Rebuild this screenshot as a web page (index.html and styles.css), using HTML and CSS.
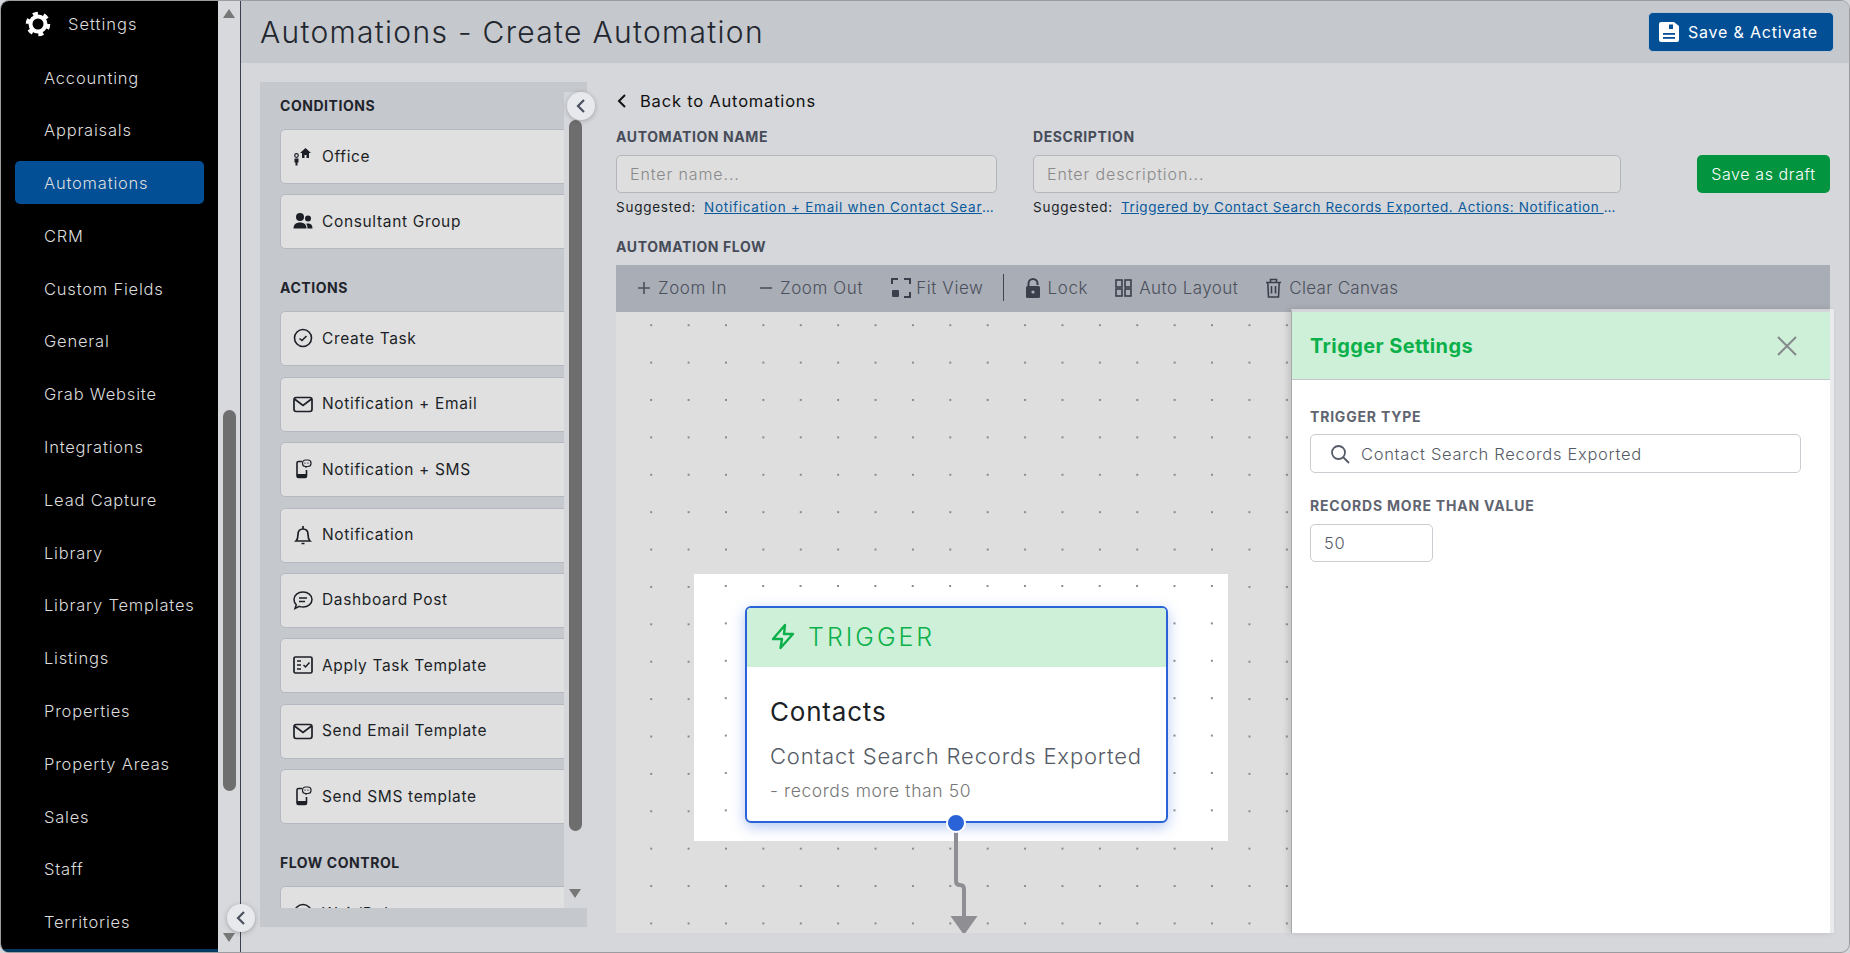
FILE: index.html
```html
<!DOCTYPE html>
<html lang="en">
<head>
  <meta charset="UTF-8">
  <title>Automations - Create Automation</title>
  <link rel="stylesheet" href="styles.css">
</head>
<body>
  <svg class="icon-defs" width="0" height="0">
    <symbol id="i-mail" viewBox="0 0 20 20"><rect x="1" y="3.500" width="18" height="14" rx="2.200" fill="none" stroke="#1c1f26" stroke-width="1.700"/><path d="M1.500 5l8.500 6.500L18.500 5" fill="none" stroke="#1c1f26" stroke-width="1.700"/></symbol>
    <symbol id="i-sms" viewBox="0 0 20 20"><path d="M9 2.500H5.500A1.500 1.500 0 0 0 4 4v13a1.500 1.500 0 0 0 1.500 1.500h6.500a1.500 1.500 0 0 0 1.500-1.500v-6" fill="none" stroke="#1c1f26" stroke-width="1.600"/><rect x="4" y="15" width="9.500" height="3.500" fill="#1c1f26"/><rect x="9.500" y="1" width="8.500" height="6.500" rx="3" fill="none" stroke="#1c1f26" stroke-width="1.200"/><path d="M11.500 4.200h1M14.500 4.200h1" stroke="#1c1f26" stroke-width="1.300"/><path d="M12 7.500l1 2 1-2" fill="#1c1f26"/></symbol>
  </svg>

  <div class="window">
    <!-- Left nav -->
    <aside class="sidebar">
      <div class="sidebar-head">
        <svg class="gear" width="26" height="26" viewBox="0 0 26 26">
          <circle cx="13" cy="13" r="7.500" fill="none" stroke="#fff" stroke-width="4"/>
          <circle cx="13" cy="13" r="10.500" fill="none" stroke="#fff" stroke-width="3.500" stroke-dasharray="5 6"/>
        </svg>
        <span>Settings</span>
      </div>
      <nav class="side-nav">
        <a class="side-link">Accounting</a>
        <a class="side-link">Appraisals</a>
        <a class="side-link active">Automations</a>
        <a class="side-link">CRM</a>
        <a class="side-link">Custom Fields</a>
        <a class="side-link">General</a>
        <a class="side-link">Grab Website</a>
        <a class="side-link">Integrations</a>
        <a class="side-link">Lead Capture</a>
        <a class="side-link">Library</a>
        <a class="side-link">Library Templates</a>
        <a class="side-link">Listings</a>
        <a class="side-link">Properties</a>
        <a class="side-link">Property Areas</a>
        <a class="side-link">Sales</a>
        <a class="side-link">Staff</a>
        <a class="side-link">Territories</a>
      </nav>
      <div class="side-peek"></div>
    </aside>

    <div class="side-track">
      <span class="arrow-up"></span>
      <span class="side-thumb"></span>
      <span class="arrow-down"></span>
      <button class="collapse side-collapse"><svg width="14" height="16" viewBox="0 0 14 16"><path d="M10 2L4 8l6 6" fill="none" stroke="#4a5060" stroke-width="2.200"/></svg></button>
    </div>

    <main class="main">
      <header class="top-bar">
        <h1>Automations - Create Automation</h1>
        <button class="btn-activate">
          <svg width="20" height="20" viewBox="0 0 20 20">
            <path d="M2 0h13l5 4v14a2 2 0 0 1-2 2H2a2 2 0 0 1-2-2V2a2 2 0 0 1 2-2z" fill="#fff"/>
            <rect x="10" y="2.500" width="4" height="4.500" fill="#024f96"/>
            <rect x="4" y="11" width="12" height="1.800" fill="#024f96"/>
            <rect x="4" y="15" width="12" height="1.800" fill="#024f96"/>
          </svg>
          Save &amp; Activate
        </button>
      </header>

      <div class="page">
        <!-- Block palette -->
        <section class="palette">
          <div class="palette-list">
            <h3 class="palette-title">CONDITIONS</h3>
            <div class="block-card">
              <svg width="20" height="20" viewBox="0 0 20 20"><path d="M7 7l5.500-5 5.500 5h-2v5h-2.500V9h-2v3H9V7z" fill="#1c1f26"/><circle cx="3.500" cy="9.500" r="1.800" fill="none" stroke="#1c1f26" stroke-width="1.200"/><path d="M1.500 12.500h4v4H4.500v3h-2v-3h-1z" fill="#1c1f26"/></svg>
              Office
            </div>
            <div class="block-card">
              <svg width="20" height="20" viewBox="0 0 20 20"><circle cx="7" cy="6" r="4" fill="#1c1f26"/><circle cx="15" cy="7.500" r="3" fill="#1c1f26"/><path d="M0.500 17.500c0-4 2.500-6 6.500-6s6.500 2 6.500 6z" fill="#1c1f26"/><path d="M14.500 17.500h5c0-3.500-1.500-5-4.500-5-.8 0-1.300.1-1.900.3 1 1.200 1.400 2.800 1.400 4.700z" fill="#1c1f26"/></svg>
              Consultant Group
            </div>

            <h3 class="palette-title next">ACTIONS</h3>
            <div class="block-card">
              <svg width="20" height="20" viewBox="0 0 20 20"><circle cx="10" cy="10" r="8.500" fill="none" stroke="#1c1f26" stroke-width="1.600"/><path d="M6.500 10.500l2.500 2 4.500-4.500" fill="none" stroke="#1c1f26" stroke-width="1.600"/></svg>
              Create Task
            </div>
            <div class="block-card"><svg width="20" height="20"><use href="#i-mail"/></svg>Notification + Email</div>
            <div class="block-card"><svg width="20" height="20"><use href="#i-sms"/></svg>Notification + SMS</div>
            <div class="block-card">
              <svg width="20" height="20" viewBox="0 0 20 20"><path d="M3 16c1.500-1.500 2-3 2-6.500C5 6 7 4 10 4s5 2 5 5.500c0 3.500.5 5 2 6.500z" fill="none" stroke="#1c1f26" stroke-width="1.700"/><path d="M10 1v3M8.500 18.500h3" stroke="#1c1f26" stroke-width="1.700"/></svg>
              Notification
            </div>
            <div class="block-card">
              <svg width="20" height="20" viewBox="0 0 20 20"><path d="M10 2c5 0 9 3 9 7.500S15 17 10 17c-1.500 0-2.600-.2-3.700-.6L2 18.500l1.300-3.800C1.800 13.400 1 11.500 1 9.500 1 5 5 2 10 2z" fill="none" stroke="#1c1f26" stroke-width="1.500"/><path d="M6 8h8M6 11.500h6" stroke="#1c1f26" stroke-width="1.500"/></svg>
              Dashboard Post
            </div>
            <div class="block-card">
              <svg width="20" height="20" viewBox="0 0 20 20"><rect x="1" y="2" width="18" height="16" rx="1.500" fill="none" stroke="#1c1f26" stroke-width="1.700"/><path d="M4 6h4M4 10h4M4 14h4" stroke="#1c1f26" stroke-width="1.500"/><path d="M10.500 10l2 2 4-4.500" fill="none" stroke="#1c1f26" stroke-width="1.500"/></svg>
              Apply Task Template
            </div>
            <div class="block-card"><svg width="20" height="20"><use href="#i-mail"/></svg>Send Email Template</div>
            <div class="block-card"><svg width="20" height="20"><use href="#i-sms"/></svg>Send SMS template</div>

            <h3 class="palette-title next">FLOW CONTROL</h3>
            <div class="block-card">
              <svg width="20" height="20" viewBox="0 0 20 20"><circle cx="10" cy="10" r="8.500" fill="none" stroke="#1c1f26" stroke-width="1.600"/></svg>
              Wait/Delay
            </div>
          </div>
          <div class="palette-track">
            <span class="palette-thumb"></span>
            <span class="arrow-down"></span>
          </div>
          <button class="collapse palette-collapse"><svg width="14" height="16" viewBox="0 0 14 16"><path d="M10 2L4 8l6 6" fill="none" stroke="#4a5060" stroke-width="2.200"/></svg></button>
        </section>

        <!-- Form and canvas -->
        <section class="editor">
          <a class="back-link">
            <svg width="12" height="16" viewBox="0 0 12 16"><path d="M9 2L3 8l6 6" fill="none" stroke="#111" stroke-width="2"/></svg>
            Back to Automations
          </a>

          <div class="form-row">
            <div class="field field-name">
              <label class="form-label">AUTOMATION NAME</label>
              <div class="text-input">Enter name...</div>
              <div class="suggest"><span>Suggested:</span><a>Notification + Email when Contact Search Records Exported</a></div>
            </div>
            <div class="field field-desc">
              <label class="form-label">DESCRIPTION</label>
              <div class="text-input">Enter description...</div>
              <div class="suggest"><span>Suggested:</span><a>Triggered by Contact Search Records Exported. Actions: Notification + Email</a></div>
            </div>
            <button class="btn-draft">Save as draft</button>
          </div>

          <label class="form-label flow-label">AUTOMATION FLOW</label>
          <div class="toolbar">
            <span class="tool tool-in"><svg width="14" height="14" viewBox="0 0 14 14"><path d="M7 1v12M1 7h12" stroke="#4c505c" stroke-width="1.600"/></svg>Zoom In</span>
            <span class="tool tool-out"><svg width="14" height="14" viewBox="0 0 14 14"><path d="M1 7h12" stroke="#4c505c" stroke-width="1.600"/></svg>Zoom Out</span>
            <span class="tool tool-fit"><svg width="20" height="20" viewBox="0 0 20 20"><path d="M1 6V1h6M13 1h6v5M19 14v5h-6" fill="none" stroke="#3a3f4b" stroke-width="2"/><rect x="1" y="12" width="7" height="7" rx="1" fill="#3a3f4b"/></svg>Fit View</span>
            <span class="tool-sep"></span>
            <span class="tool tool-lock"><svg width="16" height="20" viewBox="0 0 16 20"><path d="M3.500 9V5.500a4.500 4.500 0 0 1 9 0V7" fill="none" stroke="#3a3f4b" stroke-width="2"/><rect x="1" y="8" width="14" height="12" rx="1.500" fill="#3a3f4b"/><circle cx="8" cy="14" r="1.600" fill="#a9adb6"/></svg>Lock</span>
            <span class="tool tool-auto"><svg width="17" height="18" viewBox="0 0 17 18"><rect x="1" y="1" width="6" height="7" fill="none" stroke="#3a3f4b" stroke-width="1.600"/><rect x="10" y="1" width="6" height="7" fill="none" stroke="#3a3f4b" stroke-width="1.600"/><rect x="1" y="10" width="6" height="7" fill="none" stroke="#3a3f4b" stroke-width="1.600"/><rect x="10" y="10" width="6" height="7" fill="none" stroke="#3a3f4b" stroke-width="1.600"/></svg>Auto Layout</span>
            <span class="tool tool-clear"><svg width="17" height="20" viewBox="0 0 17 20"><path d="M1 4.500h15M5.500 4V1.500h6V4M2.800 4.500l.7 14.500h10l.7-14.500M6.500 8v7.500M10.500 8v7.500" fill="none" stroke="#3a3f4b" stroke-width="1.600"/></svg>Clear Canvas</span>
          </div>

          <div class="canvas">
            <div class="flow-layer">
              <div class="node-backdrop"></div>
              <svg class="flow-edge" width="40" height="110" viewBox="0 0 40 110">
                <path d="M10 8v49q0 4 4 4q4 0 4 4v28" fill="none" stroke="#8e8e93" stroke-width="4"/>
                <path d="M4.500 92h27L18 111z" fill="#8e8e93"/>
              </svg>
              <div class="node">
                <div class="node-head">
                  <svg width="24" height="27" viewBox="0 0 24 27"><path d="M14 2L2 16h9l-1.500 9L22 11h-9z" fill="none" stroke="#0cb04b" stroke-width="2.400" stroke-linejoin="round"/></svg>
                  <span>TRIGGER</span>
                </div>
                <div class="node-body">
                  <div class="node-title">Contacts</div>
                  <div class="node-sub">Contact Search Records Exported</div>
                  <div class="node-note">- records more than 50</div>
                </div>
                <span class="node-port"></span>
              </div>
            </div>

            <aside class="settings-panel">
              <div class="panel-head">
                <h2>Trigger Settings</h2>
                <svg width="22" height="22" viewBox="0 0 22 22"><path d="M2 2l18 18M20 2L2 20" stroke="#858a8c" stroke-width="2"/></svg>
              </div>
              <div class="panel-body">
                <label class="panel-label">TRIGGER TYPE</label>
                <div class="panel-input type-input">
                  <svg width="20" height="20" viewBox="0 0 20 20"><circle cx="8.500" cy="8.500" r="6.500" fill="none" stroke="#555b66" stroke-width="1.800"/><path d="M13 13l6 6" stroke="#555b66" stroke-width="1.800"/></svg>
                  Contact Search Records Exported
                </div>
                <label class="panel-label second">RECORDS MORE THAN VALUE</label>
                <div class="panel-input value-input">50</div>
              </div>
            </aside>
          </div>
        </section>
      </div>
    </main>
  </div>
</body>
</html>
```

FILE: styles.css
```css
/* Page frame */
* {
  box-sizing: border-box;
}
body {
  margin: 0;
  font-family: Inter, "Open Sans", sans-serif;
  background-color: #d5d7db;
  color: #1c1f26;
}
.icon-defs {
  position: absolute;
}
.window {
  display: flex;
  height: 953px;
  border: 1px solid #9a9c9f;
  border-radius: 9px;
  overflow: hidden;
}

/* Left nav */
.sidebar {
  display: flex;
  flex-direction: column;
  width: 217px;
  background-color: #000;
  color: #ddd;
}
.sidebar-head {
  display: flex;
  align-items: center;
  gap: 17px;
  height: 46px;
  padding-left: 24px;
  font-size: 16.500px;
  font-weight: 300;
  letter-spacing: 1px;
}
.side-nav {
  flex: 1;
  display: flex;
  flex-direction: column;
  gap: 9.8px;
  padding: 8.500px 14px 0;
  overflow: hidden;
}
.side-link {
  flex: none;
  height: 43px;
  line-height: 44px;
  padding-left: 29px;
  border-radius: 5px;
  font-size: 16.500px;
  font-weight: 300;
  letter-spacing: 0.8px;
}
.side-link.active {
  background-color: #024f96;
}
.side-peek {
  flex: none;
  height: 3px;
  background-color: #043a60;
}

/* Scrollbars */
.side-track {
  position: relative;
  flex: none;
  width: 23px;
  padding: 8px 5px 0;
  background-color: #d8d9dc;
  border-right: 1px solid #3a4050;
}
.arrow-up,
.arrow-down {
  display: block;
  width: 0;
  border-left: 6px solid transparent;
  border-right: 6px solid transparent;
}
.arrow-up {
  border-bottom: 9px solid #777;
}
.arrow-down {
  border-top: 9px solid #777;
}
.side-thumb {
  display: block;
  width: 13px;
  height: 381px;
  margin: 392px 0 142px;
  border-radius: 7px;
  background-color: #6e6e6e;
}
.collapse {
  position: absolute;
  display: flex;
  align-items: center;
  justify-content: center;
  width: 28px;
  height: 28px;
  padding: 0;
  border: none;
  border-radius: 50%;
  background-color: #e8e9ec;
  box-shadow: 0 1px 5px rgba(0, 0, 0, 0.25);
}
.side-collapse {
  left: 9px;
  top: 903px;
}

/* Top bar */
.main {
  flex: 1;
  display: flex;
  flex-direction: column;
  min-width: 0;
}
.top-bar {
  flex: none;
  display: flex;
  align-items: center;
  justify-content: space-between;
  height: 62px;
  padding: 0 15px 0 19px;
  background-color: #c5c8cd;
}
h1 {
  margin: 0;
  font-size: 30px;
  font-weight: 300;
  letter-spacing: 1.300px;
  color: #22262e;
}
.btn-activate {
  display: flex;
  align-items: center;
  gap: 9px;
  width: 186px;
  height: 40px;
  padding: 0 0 0 10px;
  border: 1px solid #b8c4d2;
  border-radius: 5px;
  background-color: #024f96;
  color: #fff;
  font-family: inherit;
  font-size: 16px;
  font-weight: 400;
  letter-spacing: 0.8px;
}

.page {
  flex: 1;
  display: flex;
  padding: 19px 0 0 19px;
  min-height: 0;
}

/* Block palette */
.palette {
  position: relative;
  flex: none;
  display: flex;
  width: 327px;
  height: 845px;
  padding-bottom: 19px;
  background-color: #c5c8cd;
}
.palette-list {
  flex: none;
  width: 304px;
  padding: 15px 0 0 20px;
  overflow: hidden;
}
.palette-title {
  margin: 0 0 14px;
  height: 18px;
  line-height: 18px;
  font-size: 14px;
  font-weight: 700;
  letter-spacing: 0.55px;
  color: #20232b;
}
.palette-title.next {
  margin-top: 30px;
}
.block-card {
  display: flex;
  align-items: center;
  gap: 9px;
  width: 300px;
  height: 55px;
  margin-bottom: 10.400px;
  padding: 0 0 1px 12px;
  border: 1px solid #b4b8c0;
  border-radius: 5px;
  background-color: #e0e0e0;
  font-size: 15.500px;
  letter-spacing: 0.65px;
}
.palette-track {
  flex: none;
  width: 23px;
  margin-top: 10px;
  padding: 28px 5px 0;
  background-color: #d5d7db;
}
.palette-thumb {
  display: block;
  width: 13px;
  height: 711px;
  border-radius: 7px;
  background-color: #6e6e6e;
}
.palette-track .arrow-down {
  margin: 58px 0 0 0;
}
.palette-collapse {
  left: 307px;
  top: 10px;
}

/* Form */
.editor {
  flex: none;
  width: 1214px;
  margin-left: 29px;
  padding-top: 9px;
}
.back-link {
  display: flex;
  align-items: center;
  gap: 12px;
  height: 20px;
  margin-bottom: 17px;
  font-size: 16.500px;
  letter-spacing: 0.8px;
  color: #111;
}
.form-row {
  display: flex;
  align-items: flex-start;
  margin-bottom: 22px;
}
.field-name {
  width: 381px;
  margin-right: 36px;
}
.field-desc {
  width: 588px;
  margin-right: 76px;
}
.form-label {
  display: block;
  height: 18px;
  line-height: 18px;
  margin-bottom: 9px;
  font-size: 14px;
  font-weight: 700;
  letter-spacing: 0.6px;
  color: #474c59;
}
.text-input {
  height: 38px;
  line-height: 36px;
  padding-left: 13px;
  border: 1px solid #b2b5bb;
  border-radius: 5px;
  background-color: #dedede;
  font-size: 16px;
  font-weight: 300;
  letter-spacing: 0.9px;
  color: #8a8a8a;
}
.suggest {
  display: flex;
  gap: 8px;
  height: 18px;
  line-height: 18px;
  margin-top: 5px;
  font-size: 13.500px;
  letter-spacing: 0.75px;
  white-space: nowrap;
}
.suggest a {
  flex: 1;
  min-width: 0;
  overflow: hidden;
  text-overflow: ellipsis;
  text-decoration: underline;
  color: #0a5a9c;
}
.field-name .suggest a {
  flex: none;
  width: 290px;
}
.field-desc .suggest a {
  letter-spacing: 0.6px;
}
.btn-draft {
  flex: none;
  width: 133px;
  height: 38px;
  margin-top: 27px;
  padding: 0;
  border: none;
  border-radius: 5px;
  background-color: #03943f;
  color: #fff;
  font-family: inherit;
  font-size: 16px;
  font-weight: 300;
  letter-spacing: 0.6px;
}

/* Canvas toolbar */
.toolbar {
  display: flex;
  align-items: center;
  height: 47px;
  padding: 0 0 2px 21px;
  background-color: #a9adb6;
  color: #4c505c;
  font-size: 17px;
  font-weight: 300;
  letter-spacing: 0.6px;
}
.tool {
  display: flex;
  align-items: center;
  gap: 7px;
}
.tool-out {
  margin-left: 32px;
}
.tool-fit {
  margin-left: 28px;
  gap: 5px;
}
.tool-sep {
  width: 1px;
  height: 27px;
  margin: 0 21px 0 19px;
  background-color: #40444f;
}
.tool-auto {
  margin-left: 27px;
  letter-spacing: 0.45px;
}
.tool-clear {
  margin-left: 27px;
  letter-spacing: 0.3px;
}

/* Canvas */
.canvas {
  position: relative;
  height: 621px;
  background-color: #dedede;
}
.flow-layer {
  position: absolute;
  inset: 0;
  overflow: hidden;
  background-image: radial-gradient(circle, #8a8a8a 1px, transparent 1.300px);
  background-size: 37.400px 37.400px;
  background-position: 16.500px -5.500px;
}
.node-backdrop {
  position: absolute;
  left: 78px;
  top: 262px;
  width: 534px;
  height: 267px;
  background-color: #fff;
  background-image: radial-gradient(circle, #8a8a8a 1px, transparent 1.300px);
  background-size: 37.400px 37.400px;
  background-position: 13.100px -6.700px;
}
.node {
  position: absolute;
  left: 129px;
  top: 294px;
  width: 423px;
  height: 217px;
  border: 2px solid #2a62d8;
  border-radius: 6px;
  background-color: #fff;
  box-shadow: 0 4px 14px rgba(42, 98, 216, 0.35);
}
.node-head {
  display: flex;
  align-items: center;
  gap: 13px;
  height: 59px;
  padding: 0 0 2px 24px;
  border-radius: 4px 4px 0 0;
  background-color: #cef0d8;
  color: #0cb04b;
  font-size: 25px;
  font-weight: 300;
  letter-spacing: 3px;
}
.node-body {
  padding: 29px 0 0 23px;
}
.node-title {
  height: 32px;
  line-height: 32px;
  font-size: 26px;
  font-weight: 400;
  letter-spacing: 0.8px;
}
.node-sub {
  height: 30px;
  line-height: 30px;
  margin-top: 13px;
  font-size: 22px;
  font-weight: 300;
  letter-spacing: 0.85px;
  color: #555b66;
}
.node-note {
  height: 24px;
  line-height: 24px;
  margin-top: 8px;
  font-size: 17.500px;
  font-weight: 300;
  letter-spacing: 0.6px;
  color: #777;
}
.node-port {
  position: absolute;
  left: 199px;
  bottom: -12px;
  width: 20px;
  height: 20px;
  border: 2px solid #fff;
  border-radius: 50%;
  background-color: #2a62d8;
}
.flow-edge {
  position: absolute;
  left: 330px;
  top: 512px;
}

/* Settings panel */
.settings-panel {
  position: absolute;
  left: 675px;
  right: -4px;
  top: -3px;
  bottom: 0;
  border-top: 3px solid rgba(255, 255, 255, 0.5);
  border-right: 4px solid rgba(255, 255, 255, 0.5);
  border-left: 1px solid #a5a8ad;
  background-color: #fff;
  background-clip: padding-box;
  box-shadow: -3px 0 6px rgba(0, 0, 0, 0.12);
}
.panel-head {
  display: flex;
  align-items: center;
  justify-content: space-between;
  height: 68px;
  padding: 0 32px 0 18px;
  border-bottom: 1px solid #c3c7cc;
  background-color: #cef0d8;
}
h2 {
  margin: 0;
  font-size: 20px;
  font-weight: 700;
  letter-spacing: 0.4px;
  color: #0cb04b;
}
.panel-body {
  padding: 28px 0 0 18px;
}
.panel-label {
  display: block;
  height: 18px;
  line-height: 18px;
  margin-bottom: 8px;
  font-size: 14px;
  font-weight: 700;
  letter-spacing: 0.8px;
  color: #5f6470;
}
.panel-label.second {
  margin-top: 24px;
  margin-bottom: 9px;
}
.panel-input {
  display: flex;
  align-items: center;
  border: 1px solid #c9ccd1;
  border-radius: 5px;
  font-size: 16.500px;
  font-weight: 300;
  letter-spacing: 0.7px;
  color: #555b66;
}
.type-input {
  gap: 11px;
  width: 491px;
  height: 39px;
  padding-left: 19px;
}
.value-input {
  width: 123px;
  height: 38px;
  padding-left: 13px;
}
```
